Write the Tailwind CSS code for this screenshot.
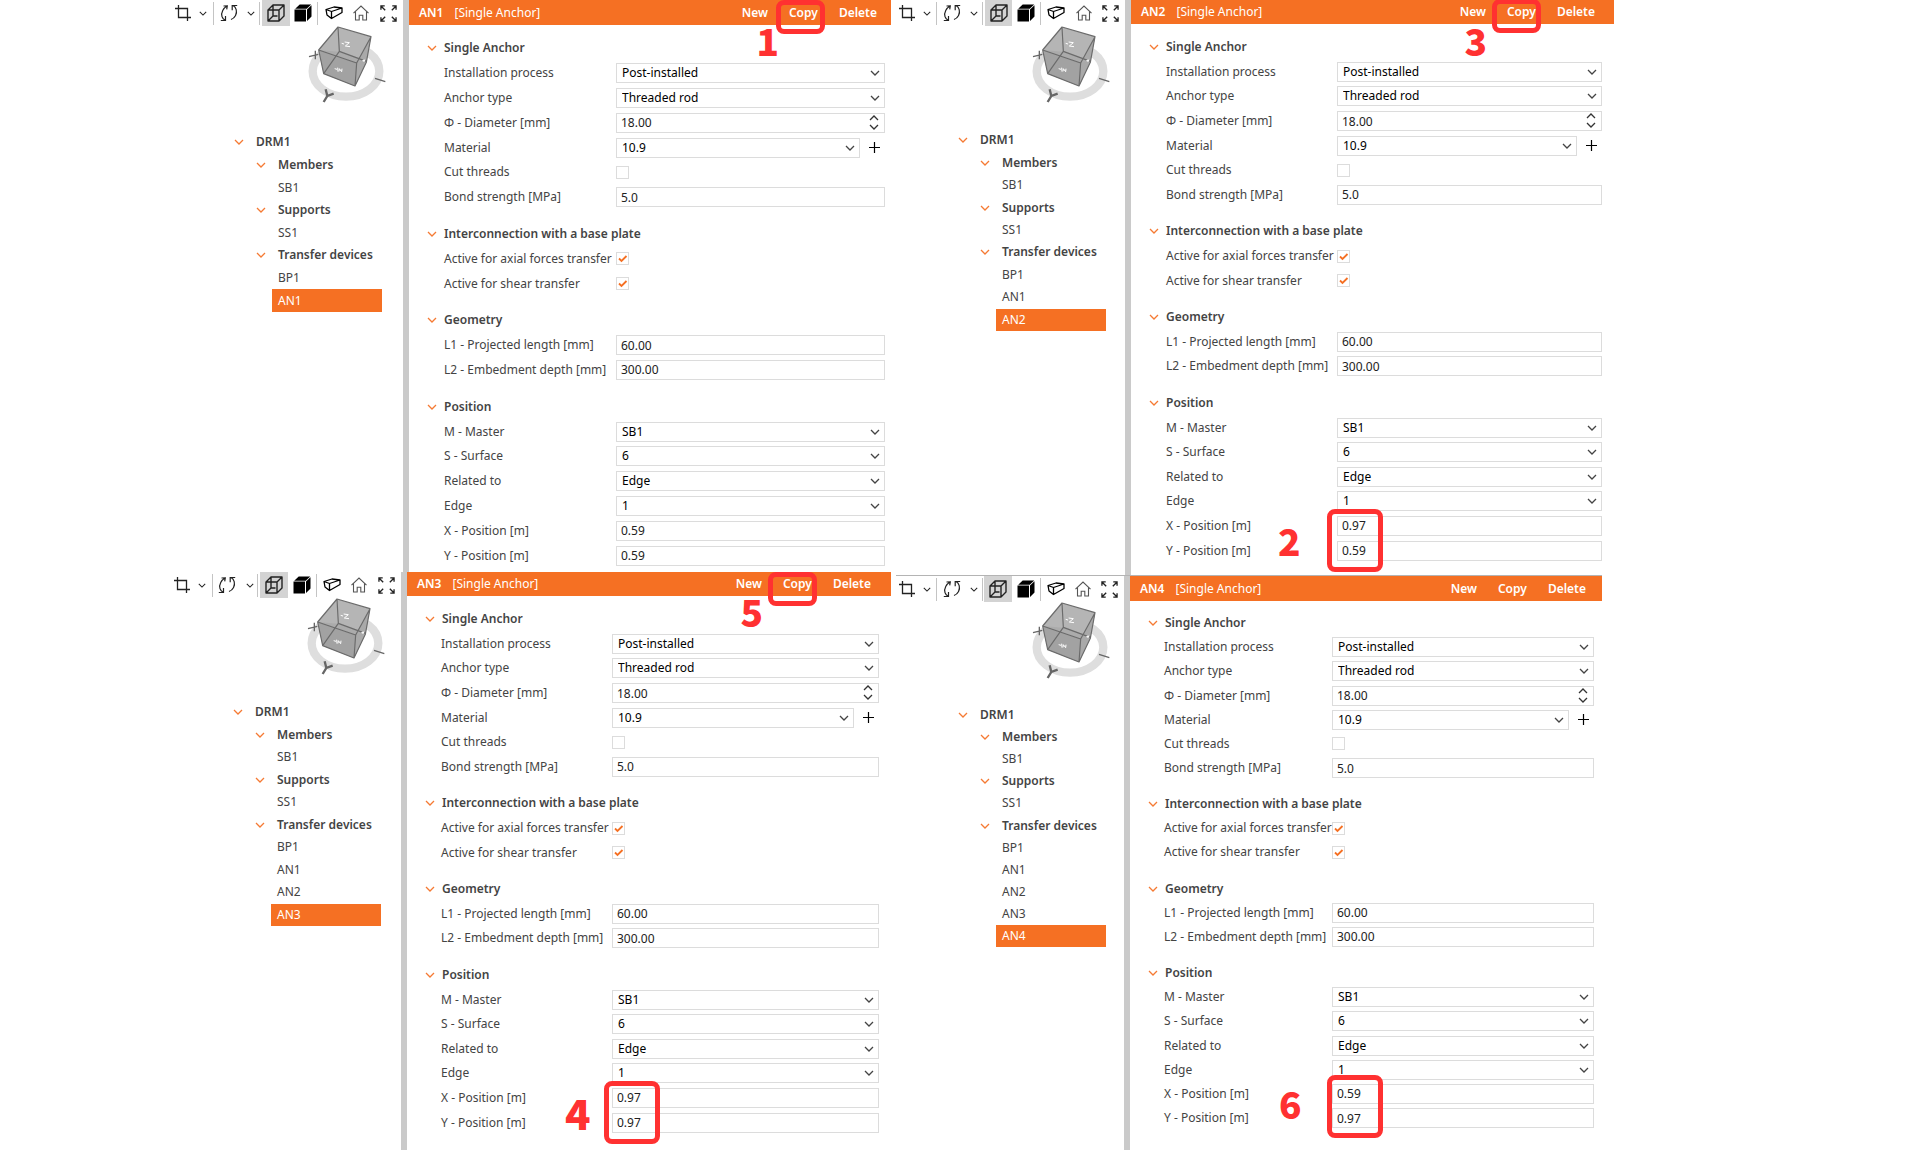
<!DOCTYPE html>
<html lang="en">

<head>
    <meta charset="UTF-8">
    <meta name="viewport" content="width=device-width, initial-scale=1.0">
    <title>Single Anchor</title>
    <script src="https://cdn.jsdelivr.net/npm/@tailwindcss/browser@4"></script>
</head>

<body class="bg-white font-['Noto_Sans','Open_Sans',sans-serif] text-xs text-[#444]">
    <!-- shared icons -->
    <svg class="hidden">
        <symbol id="i-chevron" viewBox="0 0 10 6">
            <path d="M1 1l4 4 4-4" fill="none" stroke="currentColor" stroke-width="1.3" />
        </symbol>
        <symbol id="i-spin" viewBox="0 0 10 15">
            <path d="M1 5l4-4 4 4M1 10l4 4 4-4" fill="none" stroke="currentColor" stroke-width="1.3" />
        </symbol>
        <symbol id="i-plus" viewBox="0 0 11 11">
            <path d="M5.5 0v11M0 5.500h11" fill="none" stroke="currentColor" stroke-width="1.2" />
        </symbol>
        <symbol id="i-crop" viewBox="0 0 18 18">
            <path d="M1 4.5h12.5V17M4.5 1v12.500H17" fill="none" stroke="currentColor" stroke-width="1.3" />
        </symbol>
        <symbol id="i-rotate" viewBox="0 0 18 18">
            <path d="M7 2C3.500 4 .8 8.500 2 12.500c.6 1.800 1.500 2.800 2.800 3.500M.8 16.500h4.700v-4.500M11 15.500c4.200-1.500 6.200-6 5.200-9.800-.5-2-1.600-3.400-3.200-4.200M17.200 1.500h-5v4.700M3.500 2l3.800-.2-.6 3.500" fill="none" stroke="currentColor" stroke-width="1.2" />
        </symbol>
        <symbol id="i-wire" viewBox="0 0 18 18">
            <path d="M1 6v11h11V6zM1 6l5-5h11l-5 5M17 1v11l-5 5M6 1v11M1 17l5-5h4.500" fill="none" stroke="currentColor" stroke-width="1.4" stroke-linejoin="round" />
        </symbol>
        <symbol id="i-solid" viewBox="0 0 18 18">
            <path d="M.5 5.500h11.500V17.500H.5zM1.200 4.700L5.700.5h11.500L12.700 4.700zM13 5.500L17.500 1.200v11.300L13 17z" fill="currentColor" />
        </symbol>
        <symbol id="i-member" viewBox="0 0 18 14">
            <path d="M1 3.500L9 1l8 1v4.500L6.500 12.500 2 9zM1 3.500l5.500 2L17 2M6.500 5.500v7" fill="none" stroke="currentColor" stroke-width="1.300" stroke-linejoin="round" />
        </symbol>
        <symbol id="i-home" viewBox="0 0 18 18">
            <path d="M1.500 9.200L9 2l7.500 7.200M3.500 7.800V16h3.700v-4.800h3.600V16h3.700V7.800" fill="none" stroke="currentColor" stroke-width="1.1" />
        </symbol>
        <symbol id="i-expand" viewBox="0 0 18 18">
            <path d="M1 5V1h4M1 1l4.500 4.500M13 1h4v4M17 1l-4.500 4.500M1 13v4h4M1 17l4.500-4.500M17 13v4h-4M17 17l-4.500-4.500" fill="none" stroke="currentColor" stroke-width="1.4" />
        </symbol>
        <symbol id="i-cube" viewBox="400 75 252 240">
            <ellipse cx="523" cy="214" rx="100" ry="76" fill="none" stroke="#dedede" stroke-width="25" />
            <path d="M499 81l99 29-14 77-34 71-94-37-15-71z" fill="#b5b5b5" />
            <path d="M441 150l114 39-5 69-94-37z" fill="#a2a2a2" />
            <path d="M555 189l43-79-14 77-34 71z" fill="#a9a9a9" />
            <path d="M441 150l61 5 53 34zM502 155l82 29-29 5z" fill="#ababab" />
            <path d="M499 81l99 29-14 77-34 71-94-37-15-71zM441 150l114 39 43-79M555 189l-5 69M441 150l58-69 4 73 81 30M503 154l-47 67" fill="none" stroke="#6b6b6b" stroke-width="3.500" stroke-linejoin="round" />
            <path d="M412 170l28-7M431 152v26M610 235l31 10" fill="none" stroke="#666" stroke-width="4" />
            <path d="M462 268l5 20M486 281l-19 7-11 18" fill="none" stroke="#666" stroke-width="7" />
            <path d="M510 130l7 2M519 126l14 2-12 10 14 2M489 206l7 2M498 203l1 12M502 214l1-8 7 9 1-9M572 182h8M577 178v8" fill="none" stroke="#fff" stroke-width="3" />
        </symbol>
    </svg>

    <main class="grid min-h-screen grid-cols-[170fr_721fr_723fr_306fr]">
        <div id="leftColumn" class="col-start-2 grid grid-rows-[572fr_578fr]"></div>
        <div id="rightColumn" class="grid grid-rows-[575fr_575fr]"></div>
    </main>

    <script>
        // One entry per anchor window
        const panels = [
            {
                id: 'AN1', column: 'leftColumn', anchors: ['AN1'], x: '0.59', y: '0.59',
                root: '', side: 'w-[233px] pl-[2px]', treeBox: 'mt-[26px] h-[181px]',
                header: 'h-[25px] pl-[10px] pr-[14px]', form: 'pt-[11px] pb-1 pr-[6px]', labels: 'pl-[35px] grid-cols-[172px_1fr]',
                copyMark: 'top-0 right-[66px]', step: '1', stepBox: 'top-[22px] right-[112px]'
            },
            {
                id: 'AN3', column: 'leftColumn', anchors: ['AN1', 'AN2', 'AN3'], x: '0.97', y: '0.97',
                root: '', side: 'w-[231px] pl-px', treeBox: 'mt-[24px] h-[225px]',
                header: 'h-[24px] pl-[10px] pr-[20px]', form: 'pt-[11px] pb-[15px] pr-[12px]', labels: 'pl-[34px] grid-cols-[171px_1fr]',
                copyMark: 'top-0 right-[74px]', step: '5', stepBox: 'top-[21px] right-[128px]',
                posMark: '-top-[7px] -left-[8px]', posStep: '4', posStepBox: 'top-[2px] -left-[47px] text-[42px]'
            },
            {
                id: 'AN2', column: 'rightColumn', anchors: ['AN1', 'AN2'], x: '0.97', y: '0.59',
                root: '', side: 'w-[234px] pl-[5px]', treeBox: 'mt-[24px] h-[202px]',
                header: 'h-[24px] pl-[10px] pr-[19px]', form: 'pt-[11px] pb-3 pr-[12px]', labels: 'pl-[35px] grid-cols-[171px_1fr]',
                copyMark: '-top-px right-[73px]', step: '3', stepBox: 'top-[22px] right-[127px]',
                posMark: '-top-[7px] -left-[10px]', posStep: '2', posStepBox: 'top-[2px] -left-[59px] text-[37px]'
            },
            {
                id: 'AN4', column: 'rightColumn', anchors: ['AN1', 'AN2', 'AN3', 'AN4'], x: '0.59', y: '0.97',
                root: 'mr-3 ml-[5px] border-t border-[#b4b4b4]', side: 'w-[228px]', treeBox: 'mt-[23px] h-[243px]',
                header: 'h-[25px] pl-[10px] pr-[16px]', form: 'pt-[10px] pb-5 pr-[8px]', labels: 'pl-[34px] grid-cols-[168px_1fr]',
                posMark: '-top-[9px] -left-[5px]', posStep: '6', posStepBox: '-top-[3px] -left-[53px] text-[37px]'
            }
        ];

        const sections = [
            ['Single Anchor', [
                ['select', 'Installation process', 'Post-installed'],
                ['select', 'Anchor type', 'Threaded rod'],
                ['spin', 'Φ - Diameter [mm]', '18.00'],
                ['material', 'Material', '10.9'],
                ['check', 'Cut threads', false],
                ['text', 'Bond strength [MPa]', '5.0']
            ]],
            ['Interconnection with a base plate', [
                ['check', 'Active for axial forces transfer', true],
                ['check', 'Active for shear transfer', true]
            ]],
            ['Geometry', [
                ['text', 'L1 - Projected length [mm]', '60.00'],
                ['text', 'L2 - Embedment depth [mm]', '300.00']
            ]],
            ['Position', [
                ['select', 'M - Master', 'SB1'],
                ['select', 'S - Surface', '6'],
                ['select', 'Related to', 'Edge'],
                ['select', 'Edge', '1'],
                ['text', 'X - Position [m]', 'x'],
                ['text', 'Y - Position [m]', 'y']
            ]]
        ];

        const chevron = '<svg class="h-[6px] w-[10px] shrink-0 text-[#f57a33]"><use href="#i-chevron"/></svg>';

        function selectBox(id, value) {
            return `
                <div class="relative min-w-0 flex-1">
                    <select id="${id}" class="block h-[20px] w-full appearance-none border border-[#dcdcdc] bg-white px-[5px] text-xs leading-[16px] text-black">
                        <option>${value}</option>
                    </select>
                    <svg class="pointer-events-none absolute top-[7px] right-[5px] h-[6px] w-[10px] text-[#444]"><use href="#i-chevron"/></svg>
                </div>`;
        }

        function textBox(id, value) {
            return `<input id="${id}" type="text" value="${value}" class="block h-[20px] w-full min-w-0 border border-[#dcdcdc] bg-white px-1 text-xs text-[#222]">`;
        }

        function field(type, id, value) {
            if (type === 'select') return selectBox(id, value);
            if (type === 'text') return textBox(id, value);
            if (type === 'spin') {
                return `
                    <div class="relative flex-1">
                        ${textBox(id, value)}
                        <button type="button" aria-label="Change diameter" class="absolute top-[2px] right-[6px]">
                            <svg class="block h-[15px] w-[10px] text-[#333]"><use href="#i-spin"/></svg>
                        </button>
                    </div>`;
            }
            if (type === 'material') {
                return selectBox(id, value) + `
                    <button type="button" aria-label="Add material" class="flex h-[20px] w-[25px] items-center justify-end pr-[5px] text-black">
                        <svg class="h-[11px] w-[11px]"><use href="#i-plus"/></svg>
                    </button>`;
            }
            return `
                <span class="relative block h-[13px] w-[13px]">
                    <input id="${id}" type="checkbox" ${value ? 'checked' : ''} class="peer block h-[13px] w-[13px] appearance-none border border-[#dcdcdc] bg-white">
                    <svg viewBox="0 0 13 13" class="pointer-events-none absolute inset-0 hidden h-[13px] w-[13px] peer-checked:block">
                        <path d="M3 6.500l2.500 2.500L10.500 4" fill="none" stroke="#f57023" stroke-width="1.800"/>
                    </svg>
                </span>`;
        }

        function row(panel, type, label, value, index) {
            const id = panel.id + '-' + index;
            let marks = '';
            if (value === 'x' && panel.posMark) {
                marks = `
                    <div class="pointer-events-none absolute z-10 h-[63px] w-[56px] rounded-lg border-5 border-[#ff3131] ${panel.posMark}"></div>
                    <div class="absolute font-['Noto_Sans_CJK_SC',sans-serif] leading-[44px] font-black text-[#ff3131] ${panel.posStepBox}">${panel.posStep}</div>`;
            }
            if (value === 'x') value = panel.x;
            if (value === 'y') value = panel.y;
            return `
                <div class="grid flex-1 items-center ${panel.labels}">
                    <label for="${id}" class="leading-4 whitespace-nowrap">${label}</label>
                    <div class="relative flex items-center">${field(type, id, value)}${marks}</div>
                </div>`;
        }

        function form(panel) {
            let index = 0;
            return sections.map(([title, rows], n) => `
                ${n ? '<div class="h-3"></div>' : ''}
                <h2 class="flex flex-1 items-center gap-[7px] pl-[18px] leading-4 font-semibold">${chevron}${title}</h2>
                ${rows.map(([type, label, value]) => row(panel, type, label, value, index++)).join('')}`).join('');
        }

        function tree(panel) {
            const group = name => `<li class="flex flex-1 items-center gap-[12px] pl-[84px] leading-4 font-semibold">${chevron}${name}</li>`;
            const leaf = name => name === panel.id
                ? `<li class="ml-[100px] flex w-[110px] flex-1 items-center bg-[#f57023] pl-[6px] leading-4 text-white">${name}</li>`
                : `<li class="flex flex-1 items-center pl-[106px] leading-4">${name}</li>`;
            return `
                <ul class="flex flex-col ${panel.treeBox}">
                    <li class="flex flex-1 items-center gap-[12px] pl-[62px] leading-4 font-semibold">${chevron}DRM1</li>
                    ${group('Members')}${leaf('SB1')}
                    ${group('Supports')}${leaf('SS1')}
                    ${group('Transfer devices')}${leaf('BP1')}${panel.anchors.map(leaf).join('')}
                </ul>`;
        }

        const toolbar = `
            <div class="flex h-[26px] items-center text-[#222]">
                <button type="button" aria-label="Crop" class="flex w-[22px] justify-center"><svg class="h-[18px] w-[18px]"><use href="#i-crop"/></svg></button>
                <button type="button" aria-label="Crop options" class="flex w-[19px] justify-center"><svg class="h-[5px] w-[8px]"><use href="#i-chevron"/></svg></button>
                <span class="h-[23px] w-px bg-[#c4c4c4]"></span>
                <button type="button" aria-label="Rotate" class="flex w-[30px] justify-center"><svg class="h-[18px] w-[18px]"><use href="#i-rotate"/></svg></button>
                <button type="button" aria-label="Rotate options" class="flex w-[15px] justify-center"><svg class="h-[5px] w-[8px]"><use href="#i-chevron"/></svg></button>
                <span class="mr-[2px] h-[23px] w-px bg-[#c4c4c4]"></span>
                <button type="button" aria-label="Wireframe" class="flex h-full w-[28px] items-center justify-center bg-[#d3d3d3]"><svg class="h-[18px] w-[18px]"><use href="#i-wire"/></svg></button>
                <button type="button" aria-label="Solid" class="flex w-[28px] justify-center text-black"><svg class="h-[18px] w-[18px]"><use href="#i-solid"/></svg></button>
                <span class="h-[23px] w-px bg-[#c4c4c4]"></span>
                <button type="button" aria-label="Members" class="flex w-[31px] justify-center text-black"><svg class="h-[14px] w-[18px]"><use href="#i-member"/></svg></button>
                <button type="button" aria-label="Home" class="flex w-[24px] justify-center text-[#555]"><svg class="h-[18px] w-[18px]"><use href="#i-home"/></svg></button>
                <button type="button" aria-label="Fit view" class="flex w-[30px] justify-center"><svg class="h-[17px] w-[17px]"><use href="#i-expand"/></svg></button>
            </div>`;

        function render(panel) {
            const copyMark = panel.step ? `
                <div class="pointer-events-none absolute h-[34px] w-[49px] rounded-lg border-5 border-[#ff3131] ${panel.copyMark}"></div>
                <div class="absolute font-['Noto_Sans_CJK_SC',sans-serif] text-[37px] leading-[37px] font-black text-[#ff3131] ${panel.stepBox}">${panel.step}</div>` : '';
            return `
                <section class="flex min-w-0 ${panel.root}">
                    <div class="shrink-0 ${panel.side}">
                        ${toolbar}
                        <svg class="-mt-px ml-[133px] h-[80px] w-[84px]"><use href="#i-cube"/></svg>
                        ${tree(panel)}
                    </div>
                    <div class="w-[6px] shrink-0 bg-[#cacaca]"></div>
                    <div class="flex min-w-0 flex-1 flex-col">
                        <header class="relative flex items-center bg-[#f57023] leading-4 text-white ${panel.header}">
                            <h1 class="mr-[11px] font-semibold">${panel.id}</h1>
                            <span class="mr-auto">[Single Anchor]</span>
                            <div class="flex gap-[21px] font-semibold">
                                <button type="button">New</button>
                                <button type="button">Copy</button>
                                <button type="button">Delete</button>
                            </div>
                            ${copyMark}
                        </header>
                        <form class="flex flex-1 flex-col ${panel.form}">${form(panel)}</form>
                    </div>
                </section>`;
        }

        panels.forEach(panel => {
            document.getElementById(panel.column).insertAdjacentHTML('beforeend', render(panel));
        });
    </script>
</body>

</html>
